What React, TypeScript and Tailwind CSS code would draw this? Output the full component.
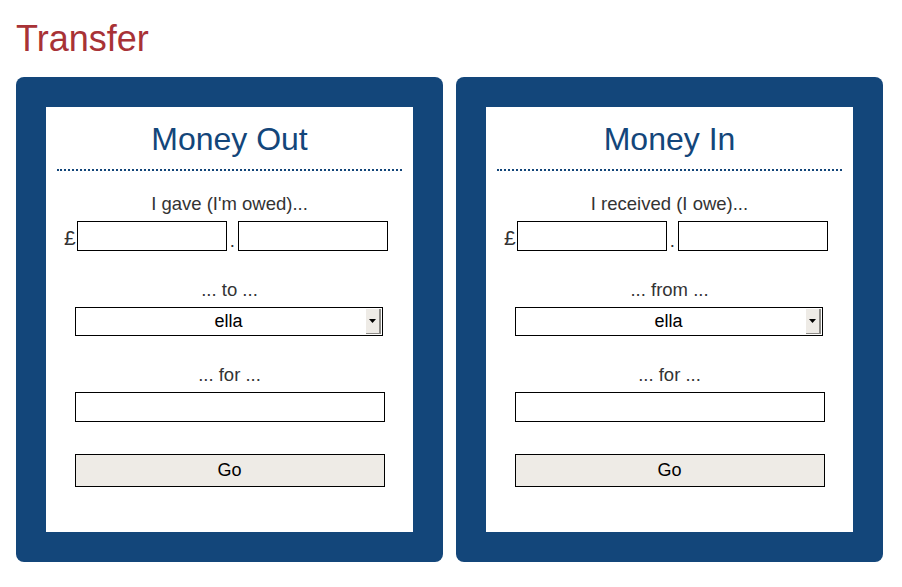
import React from "react";

const font = { fontFamily: '"Liberation Sans", Arial, sans-serif' };

function SelectBox({ value }: { value: string }) {
  return (
    <div className="relative w-[308px] h-[29px] border border-black bg-white flex items-center justify-center text-[18px] text-black">
      <span>{value}</span>
      <div className="absolute right-[1px] top-[1px] bottom-[1px] w-[15px] bg-[#eeebe6] border-r-2 border-b border-r-[#8c8a86] border-b-[#8c8a86] flex items-center justify-center">
        <svg width="7" height="4" viewBox="0 0 7 4">
          <path d="M0 0h7L3.5 4z" fill="#000" />
        </svg>
      </div>
    </div>
  );
}

function Panel({ title, amountLabel, whoLabel }: { title: string; amountLabel: string; whoLabel: string }) {
  return (
    <div className="bg-[#13467a] rounded-[8px] p-[30px] w-[427px]">
      <div className="bg-white h-[425px] px-[11px] pt-[15px] flex flex-col items-center">
        <h2 className="w-full text-center text-[32px] leading-[34px] text-[#13467a] pb-[13px] border-b-2 border-dotted border-[#13467a]">
          {title}
        </h2>
        <div className="mt-[23px] text-[18.5px] leading-[20px] text-[#333]">{amountLabel}</div>
        <div className="mt-[7px] flex items-end pr-[7px] text-[18.5px] text-[#333]">
          <span className="mr-[1px] text-[21px] leading-[26px]">£</span>
          <input className="w-[150px] h-[30px] border border-black bg-white outline-none" />
          <span className="mx-[3px] leading-[20px]">.</span>
          <input className="w-[150px] h-[30px] border border-black bg-white outline-none" />
        </div>
        <div className="mt-[29px] text-[18.5px] leading-[20px] text-[#333]">{whoLabel}</div>
        <div className="mt-[7px] pr-[2px]">
          <SelectBox value="ella" />
        </div>
        <div className="mt-[29px] text-[18.5px] leading-[20px] text-[#333]">... for ...</div>
        <input className="mt-[7px] w-[310px] h-[30px] border border-black bg-white outline-none" />
        <button className="mt-[32px] w-[310px] h-[33px] border border-black bg-[#eeebe6] text-[18px] text-black">
          Go
        </button>
      </div>
    </div>
  );
}

export default function App() {
  return (
    <div className="w-[902px] h-[587px] bg-white px-[16px] pt-[17px]" style={font}>
      <h1 className="text-[36px] leading-[43px] text-[#a83236]">Transfer</h1>
      <div className="mt-[17px] flex gap-[13px]">
        <Panel title="Money Out" amountLabel="I gave (I'm owed)..." whoLabel="... to ..." />
        <Panel title="Money In" amountLabel="I received (I owe)..." whoLabel="... from ..." />
      </div>
    </div>
  );
}
